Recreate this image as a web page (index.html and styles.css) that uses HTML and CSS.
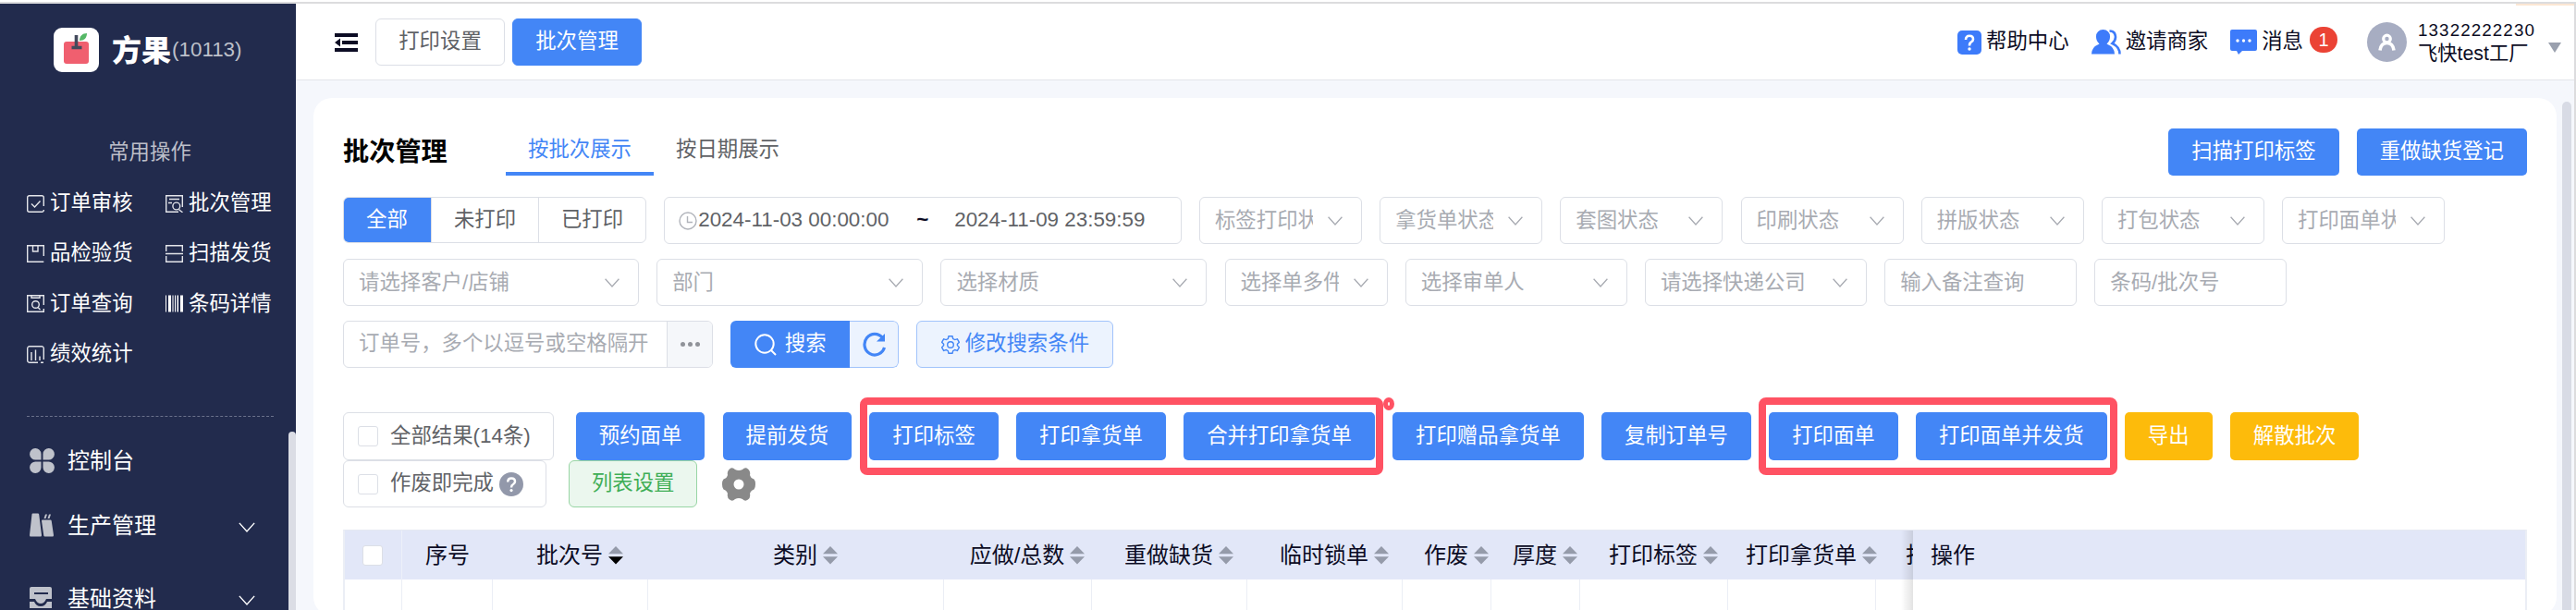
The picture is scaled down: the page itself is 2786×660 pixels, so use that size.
FILE: index.html
```html
<!DOCTYPE html>
<html lang="zh-CN">
<head>
<meta charset="utf-8">
<title>批次管理</title>
<link rel="stylesheet" href="styles.css">
</head>
<body>
<svg class="defs" width="0" height="0">
  <symbol id="chev" viewBox="0 0 16 10"><path d="M.6.8 8 9 15.4.8" fill="none" stroke="currentColor" stroke-width="1.3"/></symbol>
  <symbol id="sort" viewBox="0 0 16 20"><path d="M8 0 16 8.3H0z" fill="#959baa"/><path class="down" d="M0 11.2H16L8 19.5z"/></symbol>
</svg>
<div class="window">
  <aside class="side">
    <div class="brand">
      <svg width="49" height="48" viewBox="0 0 49 48"><rect width="49" height="48" rx="9" fill="#fff"/><rect x="11" y="15" width="27" height="24" rx="3" fill="#f05f6f"/><path d="M24.500 8v14M19.500 21.500h11" stroke="#444a5c" stroke-width="3.600" fill="none"/><path d="M28 14c0-5 3-8 8-8 0 5-3 8-8 8z" fill="#55b866"/></svg>
      <b>方果</b><span>(10113)</span>
    </div>
    <div class="side-title">常用操作</div>
    <div class="quick">
      <a><svg class="qi" viewBox="0 0 19 19"><path d="M18.300 12V2.700a2 2 0 0 0-2-2H2.700a2 2 0 0 0-2 2v13.600a2 2 0 0 0 2 2H16.300a2 2 0 0 0 2-2.300M5 9.500l3.500 3.500L14.500 6.500"/></svg>订单审核</a>
      <a><svg class="qi" viewBox="0 0 19 19"><path d="M18.300 13V.7H.7v17.600H14M4 4.500h11M3 8.500h4M16 17l2.500 1.800M14.500 15.500l2 2"/><circle cx="11.800" cy="12" r="3.900"/></svg>批次管理</a>
      <a><svg class="qi" viewBox="0 0 19 19"><path d="M18.300 12V.7H.7v17.600h17.600M6.500 1v6h5.500V1"/></svg>品检验货</a>
      <a><svg class="qi" viewBox="0 0 19 19"><path d="M.7 7V.7h17.600V7M0 9.500h19M.7 12v6.300h17.600V12"/></svg>扫描发货</a>
      <a><svg class="qi" viewBox="0 0 19 19"><path d="M18.300 11V.7H.7v17.600h17.600V15M5 1v2.300h9V1M12 13.500l2.500 2.500"/><circle cx="9.500" cy="10.500" r="3.800"/></svg>订单查询</a>
      <a><svg class="qi bar" viewBox="0 0 19 19"><path d="M0 .5h1v18H0zM3 .5h3v18H3zM7.500.5h1v18h-1zM10 .5h1v18h-1zM12.500.5h1.500v18h-1.500zM16 .5h3v18h-3z"/></svg>条码详情</a>
      <a><svg class="qi" viewBox="0 0 19 19"><path d="M18.300 15V3A2.300 2.300 0 0 0 16 .7H3A2.300 2.300 0 0 0 .7 3v13A2.300 2.300 0 0 0 3 18.300h9M5 7v9M9.500 4.500V16M14 11.500V16M15 18.300h3"/></svg>绩效统计</a>
    </div>
    <nav class="menu">
      <div class="mi"><svg width="27" height="27" viewBox="0 0 27 27" fill="#bfc2cb"><path d="M12.500 12.500H6.800a6.200 6.200 0 1 1 5.700-6.200zM14.500 12.500V6.300a6.200 6.200 0 1 1 5.700 6.200zM12.500 14.500v6.200a6.200 6.200 0 1 1-5.700-6.200zM14.500 14.500h5.700a6.200 6.200 0 1 1-5.700 6.200z"/></svg><span>控制台</span></div>
      <div class="mi"><svg width="27" height="27" viewBox="0 0 27 27" fill="#bfc2cb"><path d="M2.500 1.500q0-1 1-1h5.500q1 0 1.200 1L13 24q0 1.500-1 1.500H1Q0 25.500 0 24zM13 8.500q0-1 1-1h8.500q1 0 1.200 1L26 24q0 1.500-1 1.500h-8.500q-1 0-1.200-1zM15.500 6l1.500-4.500h2L17.500 6zM19.500 6 21 1.500h2L21.500 6z"/></svg><span>生产管理</span><svg class="mc" width="20" height="11"><use href="#chev"/></svg></div>
      <div class="mi last"><svg width="27" height="27" viewBox="0 0 27 27"><path d="M0 3q0-2 2-2h20q2 0 2 2v11h-6q-2 5-6 5t-6-5H0zM0 17h5q2 5 7 5t7-5h5v7H0z" fill="#bfc2cb"/><path d="M5 8h15" stroke="#222b4d" stroke-width="2"/></svg><span>基础资料</span><svg class="mc" width="20" height="11"><use href="#chev"/></svg></div>
    </nav>
    <i class="side-scroll"></i>
  </aside>
  <div class="main">
    <header class="top">
      <svg class="burger" width="25" height="20" viewBox="0 0 25 20" fill="#0c0c24"><path d="M0 0h25v4H0zM8 8h17v4H8zM0 16h25v4H0zM6 5.500v9L0 10z"/></svg>
      <div class="tag">打印设置</div><div class="tag on">批次管理</div>
      <div class="tools">
        <svg class="t1" width="26" height="26" viewBox="0 0 26 26"><rect width="26" height="26" rx="5" fill="#3d7bfa"/><path d="M9 10q0-4.200 4-4.200t4 3.700q0 2-2.300 3.200Q13 13.500 13 16.500" fill="none" stroke="#fff" stroke-width="2.600"/><circle cx="13" cy="20" r="1.700" fill="#fff"/></svg><span>帮助中心</span>
        <svg class="t2" width="32" height="27" viewBox="0 0 32 27"><path d="M12.500 0a7.500 7.500 0 0 1 7.500 8q0 4-3.500 7.500Q25 19 25 26.500H0Q0 19 8.500 15.500 5 12 5 8a7.500 7.500 0 0 1 7.500-8z" fill="#3d7bfa"/><path d="M19.500 1.500q6 0 6.500 6.500 0 4-3.500 7Q30.500 18.500 30.500 26.500" fill="none" stroke="#3d7bfa" stroke-width="2.600"/></svg><span>邀请商家</span>
        <svg class="t3" width="29" height="27" viewBox="0 0 29 27"><path d="M2 0h25q2 0 2 2v19q0 2-2 2H13l-4 4-2-4H2q-2 0-2-2V2q0-2 2-2z" fill="#3d7bfa"/><g fill="#fff"><circle cx="8" cy="12" r="1.700"/><circle cx="14.500" cy="12" r="1.700"/><circle cx="21" cy="12" r="1.700"/></g></svg><span>消息</span>
        <b class="badge">1</b>
        <svg class="avatar" width="43" height="43" viewBox="0 0 43 43"><circle cx="21.500" cy="21.500" r="21.500" fill="#a7adc2"/><circle cx="21.500" cy="18" r="3.800" fill="none" stroke="#fff" stroke-width="3.200"/><path d="M14 30.500q1-8 7.500-8t7.500 8" fill="none" stroke="#fff" stroke-width="3.600"/></svg>
        <div class="user"><em>13322222230</em><div>飞快test工厂</div></div>
        <i class="caret"></i>
      </div>
    </header>
    <section class="card">
      <div class="head"><h1>批次管理</h1><div class="tab on">按批次展示</div><div class="tab">按日期展示</div><div class="btn first">扫描打印标签</div><div class="btn">重做缺货登记</div></div>
      <div class="row r1">
        <div class="seg"><span class="on">全部</span><span>未打印</span><span>已打印</span></div>
        <div class="date"><svg width="20" height="20" viewBox="0 0 20 20" fill="none" stroke="#b1b4bb" stroke-width="1.400"><circle cx="10" cy="10" r="9"/><path d="M9.500 5v6.500H15"/></svg><span>2024-11-03 00:00:00</span><b>~</b><span>2024-11-09 23:59:59</span></div>
        <div class="sel"><span>标签打印状态</span><svg><use href="#chev"/></svg></div>
        <div class="sel"><span>拿货单状态</span><svg><use href="#chev"/></svg></div>
        <div class="sel"><span>套图状态</span><svg><use href="#chev"/></svg></div>
        <div class="sel"><span>印刷状态</span><svg><use href="#chev"/></svg></div>
        <div class="sel"><span>拼版状态</span><svg><use href="#chev"/></svg></div>
        <div class="sel"><span>打包状态</span><svg><use href="#chev"/></svg></div>
        <div class="sel"><span>打印面单状态</span><svg><use href="#chev"/></svg></div>
      </div>
      <div class="row r2">
        <div class="sel xl"><span>请选择客户/店铺</span><svg><use href="#chev"/></svg></div>
        <div class="sel lg"><span>部门</span><svg><use href="#chev"/></svg></div>
        <div class="sel lg"><span>选择材质</span><svg><use href="#chev"/></svg></div>
        <div class="sel"><span>选择单多件</span><svg><use href="#chev"/></svg></div>
        <div class="sel md"><span>选择审单人</span><svg><use href="#chev"/></svg></div>
        <div class="sel md"><span>请选择快递公司</span><svg><use href="#chev"/></svg></div>
        <div class="sel inp"><span>输入备注查询</span></div>
        <div class="sel inp"><span>条码/批次号</span></div>
      </div>
      <div class="row r3">
        <div class="order"><span>订单号，多个以逗号或空格隔开</span><div><i></i><i></i><i></i></div></div>
        <div class="search"><div><svg width="24" height="24" viewBox="0 0 24 24" fill="none" stroke="#fff" stroke-width="2"><circle cx="11" cy="11" r="9.700"/><path d="m18 18 5 5"/></svg>搜索</div><div class="re"><svg width="27" height="27" viewBox="0 0 27 27"><path d="M22.500 6.500A11 11.300 0 1 0 24.500 17" fill="none" stroke="#4386f6" stroke-width="3.200"/><path d="M25 2v8.500h-9z" fill="#4386f6"/></svg></div></div>
        <div class="plain"><svg width="20" height="20" viewBox="0 0 20 20" fill="none" stroke="#4386f6" stroke-width="1.400"><path d="M8 .8h4l.7 2.700 2 1.100 2.700-.8 2 3.500-2 2v1.500l2 2-2 3.500-2.700-.8-2 1.100-.7 2.700H8l-.7-2.700-2-1.100-2.700.8-2-3.500 2-2V9.300l-2-2 2-3.500 2.700.8 2-1.100z"/><circle cx="10" cy="10" r="3.300"/></svg>修改搜索条件</div>
      </div>
      <div class="row r4">
        <div class="check all"><i></i>全部结果(14条)</div>
        <div class="btn">预约面单</div><div class="btn">提前发货</div>
        <div class="marked"><div class="btn">打印标签</div><div class="btn">打印拿货单</div><div class="btn">合并打印拿货单</div><i class="frame"></i><i class="dot"></i></div>
        <div class="btn">打印赠品拿货单</div><div class="btn">复制订单号</div>
        <div class="marked"><div class="btn">打印面单</div><div class="btn">打印面单并发货</div><i class="frame wide"></i></div>
        <div class="btn gold">导出</div><div class="btn gold">解散批次</div>
      </div>
      <div class="row r5">
        <div class="check"><i></i>作废即完成<svg width="26" height="26" viewBox="0 0 26 26"><circle cx="13" cy="13" r="13" fill="#9298aa"/><path d="M9.200 10.500q0-4 3.900-4t3.900 3.600q0 1.700-2 2.900-2 1-2 3.500" fill="none" stroke="#fff" stroke-width="2.500"/><circle cx="13" cy="19.600" r="1.600" fill="#fff"/></svg></div>
        <div class="green">列表设置</div>
        <svg class="cog" width="36" height="36" viewBox="0 0 36 36"><path fill="#898989" fill-rule="evenodd" d="M8 1.500q3-2.500 6 .5 4 1.800 8 0 3-3 6-.5 3 2.500 2 6.500 1 3.500 4.500 4.500Q36 14 36 18t-1.500 5.500Q31 24.500 30 28q1 4-2 6.500-3 2.500-6-.5-4-1.800-8 0-3 3-6 .5Q5 32 6 28q-1-3.500-4.500-4.500Q0 22 0 18t1.500-5.500Q5 11.500 6 8 5 4 8 1.500zM18 12.500a5.500 5.500 0 1 0 0 11 5.500 5.500 0 0 0 0-11z"/></svg>
      </div>
      <div class="table">
        <div class="scroll">
          <div class="col c0"><div class="th"><i></i></div></div>
          <div class="col c1"><div class="th">序号</div></div>
          <div class="col c2 desc"><div class="th"><span>批次号<svg><use href="#sort"/></svg></span></div></div>
          <div class="col c3"><div class="th"><span>类别<svg><use href="#sort"/></svg></span></div></div>
          <div class="col c4"><div class="th"><span>应做/总数<svg><use href="#sort"/></svg></span></div></div>
          <div class="col c2"><div class="th"><span>重做缺货<svg><use href="#sort"/></svg></span></div></div>
          <div class="col c2"><div class="th"><span>临时锁单<svg><use href="#sort"/></svg></span></div></div>
          <div class="col c5"><div class="th"><span>作废<svg><use href="#sort"/></svg></span></div></div>
          <div class="col c5"><div class="th"><span>厚度<svg><use href="#sort"/></svg></span></div></div>
          <div class="col c4"><div class="th"><span>打印标签<svg><use href="#sort"/></svg></span></div></div>
          <div class="col c4"><div class="th"><span>打印拿货单<svg><use href="#sort"/></svg></span></div></div>
          <div class="col c6"><div class="th">打</div></div>
        </div>
        <div class="fixed"><div class="th">操作</div></div>
      </div>
    </section>
    <i class="page-scroll"></i>
    <i class="strip"></i>
  </div>
</div>
</body>
</html>
```
FILE: styles.css
```css
* { box-sizing: border-box; }
body { margin: 0; font: 22.4px/1 "Liberation Sans", "Noto Sans CJK SC", sans-serif; color: #0c0c24; background: #fff; overflow: hidden; }
i, em { font-style: normal; display: block; }
svg { display: block; flex: none; }
.defs { position: absolute; }
.window { width: 2786px; height: 660px; border-top: 2px solid #fff; overflow: hidden; display: flex; position: relative; }
.window::before { content: ""; position: absolute; left: 0; right: 0; top: 0; height: 2px; background: #dcdcde; }
.window::after { content: ""; position: absolute; right: 0; top: 0; bottom: 0; width: 2px; background: #dcdcde; }

.side { width: 320px; margin-top: 2px; background: #222b4d; color: #fff; flex: none; position: relative; overflow: hidden; }
.brand { display: flex; align-items: center; padding: 26px 0 0 58px; }
.brand b { font-size: 32px; font-weight: 900; margin: 2px 0 0 14px; }
.brand span { color: #bdc0ca; margin-left: 1px; }
.side-title { text-align: center; color: #bdbfc9; margin: 72px 0 0 4px; line-height: 30px; }
.quick { display: grid; grid-template-columns: 150px 140px; grid-auto-rows: 54.4px; margin: 13px 0 0 29px; }
.quick a { display: flex; align-items: center; gap: 6px; }
.qi { width: 19px; height: 19px; fill: none; stroke: #e4e5ea; stroke-width: 1.4; }
.qi.bar { fill: #fff; stroke: none; }
.menu { border-top: 1px dashed #6a718b; margin: 39px 24px 0 29px; padding-top: 13px; }
.mi { display: flex; align-items: center; height: 70px; font-size: 24px; padding: 0 19px 0 3px; }
.mi span { margin-left: 14px; flex: 1; }
.mi.last { margin-top: 9px; }
.mc { position: relative; top: 2px; }
.side-scroll { position: absolute; left: 312px; top: 463px; width: 8px; height: 260px; border-radius: 4px; background: #dbdde5; }

.main { flex: 1; background: #f5f7fc; position: relative; margin-top: 2px; }
.top { height: 83px; background: #fff; border-bottom: 1px solid #e3e5ea; display: flex; align-items: center; padding-left: 42px; padding-top: 1px; }
.burger { margin-right: 19px; }
.tag { width: 140px; height: 51px; border: 1px solid #dcdfe6; border-radius: 6px; margin-right: 8px; display: flex; align-items: center; justify-content: center; color: #606266; }
.tag.on { background: #4386f6; border-color: #4386f6; color: #fff; }
.tools { margin-left: auto; display: flex; align-items: center; padding-right: 16px; }
.tools span { margin-left: 5px; }
.t2 { margin-left: 24px; }
.t3 { margin-left: 24px; }
.badge { width: 30px; height: 28px; border-radius: 14px; background: #eb4335; color: #fff; font-size: 20px; font-weight: 400; display: flex; align-items: center; justify-content: center; margin: -5px 0 0 7px; }
.avatar { margin-left: 32px; }
.user { margin-left: 12px; width: 129px; font-size: 21.3px; white-space: nowrap; }
.user em { font-size: 18.8px; letter-spacing: 1.1px; line-height: 24px; }
.user div { line-height: 26px; }
.caret { border: 7px solid transparent; border-top: 11px solid #9aa0ae; border-bottom: 0; margin: 11px 0 0 12px; }
.strip { position: absolute; right: 2px; top: 0; width: 63px; height: 2px; background: #fbe6d3; }

.card { margin: 19px 21px 0 19px; height: 560px; border-radius: 20px; background: #fff; padding: 33px 32px 0; }
.head { display: flex; height: 51px; align-items: stretch; }
h1 { font-size: 28.2px; line-height: 51px; margin: 0 63px 0 0; color: #000; font-weight: 700; width: 113px; white-space: nowrap; flex: none; }
.tab { width: 160px; text-align: center; line-height: 46px; color: #606266; }
.tab.on { color: #4386f6; border-bottom: 4px solid #4386f6; }
.btn { height: 51px; padding: 0 25px; background: #4386f6; color: #fff; border-radius: 5px; display: flex; align-items: center; white-space: nowrap; flex: none; }
.head .first { margin: 0 19px 0 auto; }
.row { display: flex; gap: 19.2px; }
.r1 { margin-top: 23px; }
.r2, .r3 { margin-top: 16px; }
.r4 { margin-top: 48px; }
.seg { display: flex; width: 328px; height: 50px; border: 1px solid #dcdfe6; border-radius: 6px; color: #606266; overflow: hidden; }
.seg span { flex: 1 1 116px; display: flex; align-items: center; justify-content: center; border-left: 1px solid #dcdfe6; }
.seg .on { flex: 0 0 95px; background: #4386f6; color: #fff; margin: -1px 0 -1px -1px; border: 0; }
.date { width: 559.6px; height: 51px; border: 1.6px solid #dcdfe6; border-radius: 6px; padding-left: 15px; display: flex; align-items: center; color: #606266; }
.date span { width: 208px; white-space: nowrap; }
.date svg { margin-right: 1px; }
.date b { width: 69px; text-align: center; color: #0c0c24; }
.sel { width: 176px; height: 51px; border: 1.6px solid #dcdfe6; border-radius: 6px; color: #a8abb2; display: flex; align-items: center; padding: 0 20px 0 16px; justify-content: space-between; flex: none; }
.sel span { white-space: nowrap; overflow: hidden; line-height: 34px; }
.sel svg { width: 16px; height: 10px; margin-left: 16px; }
.xl { width: 320px; }
.lg { width: 288px; }
.md { width: 240px; }
.inp { width: 208px; }
.order { width: 400px; height: 51px; border: 1.6px solid #dcdfe6; border-radius: 6px; display: flex; color: #a8abb2; overflow: hidden; }
.order span { flex: 1; padding-left: 16px; line-height: 48px; white-space: nowrap; overflow: hidden; }
.order div { width: 49px; background: #f5f7fa; border-left: 1px solid #dcdfe6; display: flex; align-items: center; justify-content: center; gap: 3px; }
.order div i { width: 5px; height: 5px; border-radius: 50%; background: #909399; }
.search { display: flex; width: 182px; height: 51px; border-radius: 6px; overflow: hidden; color: #fff; }
.search div { width: 129px; display: flex; align-items: center; justify-content: center; gap: 9px; background: #4386f6; }
.search .re { width: 53px; background: #ecf3fe; border: 1px solid #a1c3fb; border-left: 0; border-radius: 0 6px 6px 0; }
.plain { width: 213px; height: 51px; border: 1px solid #a1c3fb; border-radius: 6px; background: #ecf3fe; color: #4386f6; display: flex; align-items: center; justify-content: center; gap: 6px; }
.check { width: 220px; height: 51px; border: 1px solid #dcdfe6; border-radius: 6px; display: flex; align-items: center; color: #606266; padding-left: 15px; margin-right: 5px; white-space: nowrap; }
.check.all { width: 228px; margin-right: 4.6px; }
.check i { width: 22px; height: 22px; border: 1px solid #dcdfe6; border-radius: 3px; margin-right: 13px; }
.check svg { margin-left: 6px; }
.r4 { height: 52px; }
.r4 .btn, .r4 .check { height: 52px; }
.marked { display: flex; gap: 19.2px; position: relative; }
.frame { position: absolute; inset: -16px -9px -16px -10px; border: 8px solid #ff5263; border-radius: 8px; }
.frame.wide { left: -11px; right: -11px; }
.dot { position: absolute; right: -21px; top: -16px; width: 12px; height: 14px; border: 5px solid #ff5263; border-radius: 50%; }
.btn.gold { background: #fdbb0b; }
.green { width: 139px; height: 51px; border: 1px solid #98d5a4; border-radius: 6px; background: #ebf7ee; color: #3fae56; display: flex; align-items: center; justify-content: center; }
.cog { margin: 8px 0 0 8px; }

.table { margin-top: 24px; height: 120px; border-top: 1px solid #e6e9f2; border-left: 2px solid #ebeef5; border-right: 2px solid #ebeef5; display: flex; font-size: 24px; }
.scroll { width: 1696px; overflow: hidden; display: flex; position: relative; flex: none; }
.scroll::after { content: ""; position: absolute; right: 0; top: 0; bottom: 0; width: 13px; background: linear-gradient(90deg, transparent, rgba(0, 0, 0, .11)); }
.col { flex: none; border-right: 1px solid #ebeef5; }
.th { height: 53px; background: #e2e7f8; display: flex; align-items: center; justify-content: center; white-space: nowrap; margin-right: -1px; }
.th span { position: relative; left: -1px; }
.th svg { position: absolute; left: calc(100% + 6px); top: 2px; width: 16px; height: 20px; }
.desc svg { --down: #000; }
.down { fill: var(--down, #959baa); }
.th i { width: 22px; height: 22px; border: 1px solid #dcdfe6; border-radius: 3px; background: #fff; }
.c0 { width: 62px; }
.c0 .th { border-right: 1px solid #edf0f9; }
.c0 .th i { margin-right: 2px; }
.c1 { width: 98px; }
.c2 { width: 168px; }
.c3 { width: 320px; }
.c4 { width: 160px; }
.c5 { width: 96px; }
.c6 { width: 60px; }
.c6 .th { justify-content: flex-start; padding-left: 32px; }
.fixed { flex: 1; }
.fixed .th { justify-content: flex-start; padding-left: 19px; margin: 0; }
.page-scroll { position: absolute; left: 2451px; top: 106px; width: 10px; height: 600px; border-radius: 5px; background: #d8dbe5; }
```
